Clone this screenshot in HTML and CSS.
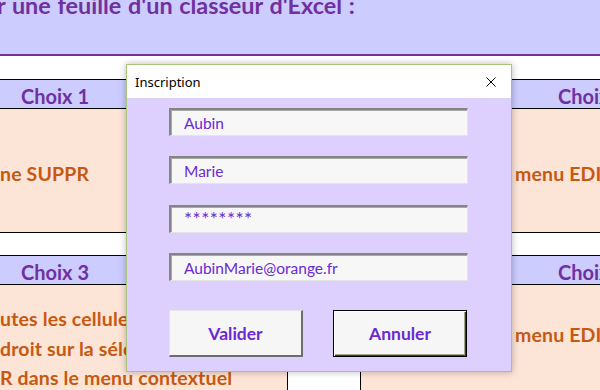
FILE: index.html
```html
<!DOCTYPE html>
<html lang="fr">
<head>
<meta charset="utf-8">
<title>Inscription</title>
<link rel="stylesheet" href="styles.css">
</head>
<body>
<div class="sheet">
  <div class="band"><h1 class="title">r une feuille d'un classeur d'Excel :</h1></div>
  <div class="grid">
    <div class="gap-row"></div><div class="gap-row"></div><div class="gap-row"></div>

    <div class="head head-left">Choix 1</div>
    <div class="head head-mid"></div>
    <div class="head head-right">Choix 2</div>

    <div class="cell cell-left cell-one">ne SUPPR</div>
    <div class="cell-mid"></div>
    <div class="cell cell-right cell-one"><span class="indent">menu EDITION</span></div>

    <div class="gap-row gap-two"></div><div class="gap-row gap-two"></div><div class="gap-row gap-two"></div>

    <div class="head head-left">Choix 3</div>
    <div class="head head-mid"></div>
    <div class="head head-right">Choix 4</div>

    <div class="cell cell-left cell-multi">
      <p class="line">utes les cellules</p>
      <p class="line">droit sur la sélection</p>
      <p class="line">R dans le menu contextuel</p>
    </div>
    <div class="cell-mid"></div>
    <div class="cell cell-right cell-low"><span class="indent">menu EDITION</span></div>
  </div>
</div>

<div class="dialog">
  <div class="titlebar">
    <span class="caption">Inscription</span>
    <svg class="close" width="10" height="10" viewBox="0 0 10 10" aria-hidden="true">
      <path d="M0.5 0.5 L9.5 9.5 M9.5 0.5 L0.5 9.5" stroke="#000" stroke-width="1" fill="none"/>
    </svg>
  </div>
  <div class="form">
    <div class="field">Aubin</div>
    <div class="field">Marie</div>
    <div class="field field-pass">********</div>
    <div class="field">AubinMarie@orange.fr</div>
    <div class="buttons">
      <div class="btn">Valider</div>
      <div class="btn btn-default">Annuler</div>
    </div>
  </div>
</div>
</body>
</html>
```
FILE: styles.css
```css
html, body {
  margin: 0;
  padding: 0;
}
body {
  width: 600px;
  height: 390px;
  overflow: hidden;
  position: relative;
  background: #ffffff;
  font-family: Lato, "Liberation Sans", sans-serif;
}

.sheet {
  width: 824px;
}

.band {
  height: 54px;
  background: #ccccff;
  border-bottom: 2px solid #7030a0;
  overflow: hidden;
}
.title {
  margin: -7px 0 0 -3px;
  font-size: 23.4px;
  line-height: 25px;
  font-weight: 700;
  color: #7030a0;
  white-space: nowrap;
  word-spacing: 1px;
}

.grid {
  display: grid;
  grid-template-columns: 288px 72px 464px;
  grid-template-rows: 23px 30px 124px 22px 30px 120px;
}

.gap-row {
  background: #ffffff;
}

.head {
  background: #ccccff;
  border-top: 1px solid #000;
  border-bottom: 1px solid #000;
  color: #7030a0;
  font-weight: 700;
  font-size: 20px;
  line-height: 20px;
  display: flex;
  align-items: center;
  padding-top: 3px;
  box-sizing: border-box;
  white-space: nowrap;
}
.head-left {
  padding-left: 21px;
}
.head-mid {
  background: #ffffff;
}
.head-right {
  justify-content: center;
}

.cell {
  background: #fce4d6;
  color: #c65911;
  font-weight: 700;
  font-size: 19.5px;
  line-height: 20px;
  letter-spacing: 0.15px;
  white-space: nowrap;
  overflow: hidden;
  box-sizing: border-box;
}
.cell-one {
  border-bottom: 1px solid #000;
  display: flex;
  align-items: center;
  padding-top: 6px;
}
.cell-left {
  border-right: 1px solid #000;
}
.cell-right {
  border-left: 1px solid #000;
}
.cell-mid {
  background: #ffffff;
}
.indent {
  padding-left: 154px;
}
.cell-multi {
  padding-top: 19px;
}
.line {
  margin: 0;
  line-height: 29.5px;
}
.cell-low {
  padding-top: 40px;
}

/* Dialog (overlay window) */
.dialog {
  position: absolute;
  left: 126px;
  top: 64px;
  width: 386px;
  height: 308px;
  box-sizing: border-box;
  border: 1px solid #a9c47f;
  box-shadow: 0 0 7px rgba(0, 0, 0, 0.28);
  display: flex;
  flex-direction: column;
}
.titlebar {
  height: 33px;
  flex: none;
  background: #ffffff;
  display: flex;
  align-items: center;
  justify-content: space-between;
  padding: 0 15px 0 8px;
}
.caption {
  font-family: "Noto Sans", "Open Sans", sans-serif;
  font-size: 13px;
  color: #000;
}
.close {
  display: block;
}

.form {
  flex: 1;
  background: #ddd0ff;
  padding: 10px 43px 0 42px;
  display: flex;
  flex-direction: column;
  gap: 20.4px;
}
.field {
  height: 28px;
  box-sizing: border-box;
  background: #f7f7f7;
  border-style: solid;
  border-width: 2px 1px 1px 2px;
  border-color: #858585 #e4e4e4 #e4e4e4 #858585;
  box-shadow: inset 1px 1px 0 #a8a8a8;
  padding-left: 13px;
  display: flex;
  align-items: center;
  font-size: 15.5px;
  color: #6b29d3;
  white-space: nowrap;
}
.field-pass {
  font-size: 19px;
  letter-spacing: 0.5px;
  padding-bottom: 1px;
}

.buttons {
  display: flex;
  gap: 30px;
  margin-top: 8.6px;
}
.btn {
  width: 134px;
  height: 47px;
  box-sizing: border-box;
  background: #f6f6f6;
  border-style: solid;
  border-width: 1px 2px 2px 1px;
  border-color: #e6e6e6 #6d6d6d #6d6d6d #e6e6e6;
  display: flex;
  align-items: center;
  justify-content: center;
  font-weight: 700;
  font-size: 17.5px;
  color: #6b29d3;
}
.btn-default {
  border-width: 1px;
  border-color: #000;
  box-shadow: inset 1px 1px 0 #ffffff, inset -1px -1px 0 #3a3a3a, inset -2px -2px 0 #a3a88a;
}
```
